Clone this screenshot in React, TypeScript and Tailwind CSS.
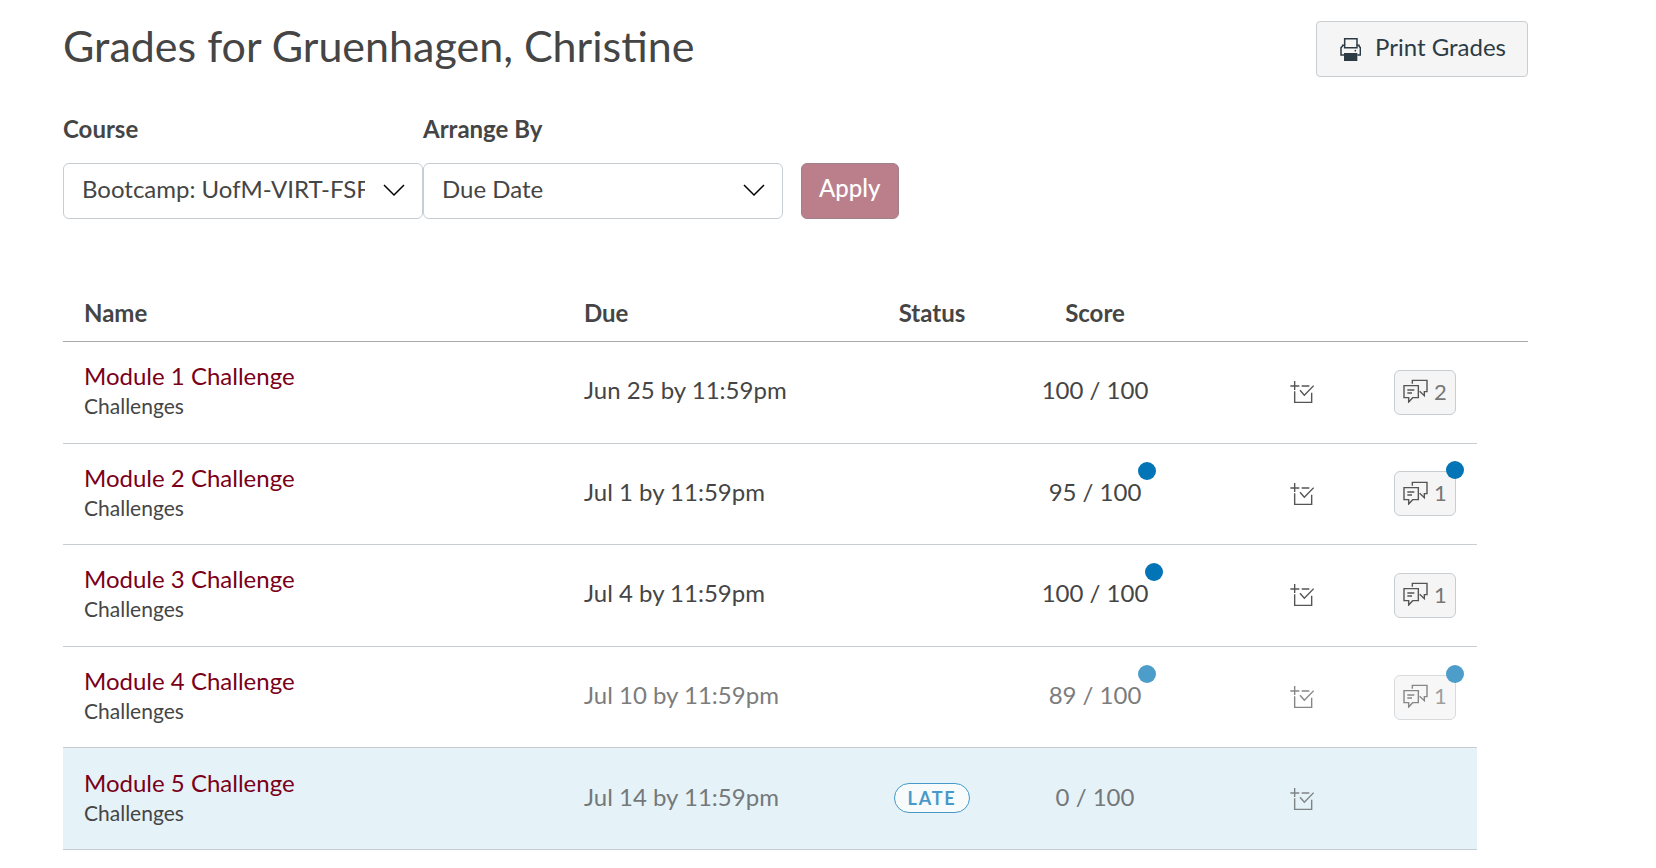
import React from "react";

type Row = {
  id: number;
  due: string;
  score: string;
  comments?: number;
  late?: boolean;
  dim?: boolean;
  scoreDot?: boolean;
  commentDot?: boolean;
};

const rows: Row[] = [
  { id: 1, due: "Jun 25 by 11:59pm", score: "100 / 100", comments: 2 },
  { id: 2, due: "Jul 1 by 11:59pm", score: "95 / 100", comments: 1, scoreDot: true, commentDot: true },
  { id: 3, due: "Jul 4 by 11:59pm", score: "100 / 100", comments: 1, scoreDot: true },
  { id: 4, due: "Jul 10 by 11:59pm", score: "89 / 100", comments: 1, scoreDot: true, commentDot: true, dim: true },
  { id: 5, due: "Jul 14 by 11:59pm", score: "0 / 100", late: true, dim: true },
];

function PrinterIcon() {
  return (
    <svg viewBox="0 0 63 75" className="h-[25px] w-[21px]" fill="none" stroke="currentColor" strokeWidth="4.5" aria-hidden="true">
      <path d="M14 24V5h37v19" />
      <path d="M12 54H3V32l5-5v-2h6v7h37v-7h6v2l4 5v22h-9" />
      <rect x="12" y="48" width="40" height="24" fill="currentColor" stroke="none" />
      <circle cx="46" cy="41" r="2.5" fill="currentColor" stroke="none" />
    </svg>
  );
}

function RubricIcon() {
  return (
    <svg viewBox="0 0 72 72" className="h-6 w-6" fill="none" stroke="currentColor" strokeWidth="4.2" aria-hidden="true">
      <path d="M14 3v27M1 18h27M35 18h23M14 34v33h51V38M30 31l13 15 28-29" />
    </svg>
  );
}

function CommentsIcon() {
  return (
    <svg viewBox="0 0 75 72" className="h-6 w-[25px]" fill="none" stroke="currentColor" strokeWidth="4.2" aria-hidden="true">
      <path d="M28 14V4h44v34h-8v12L50 37" />
      <path d="M3 20h43v36H29L17 69V56H3zM13 33h21M13 42h14" />
    </svg>
  );
}

function Chevron() {
  return (
    <svg viewBox="0 0 22 13" className="pointer-events-none absolute top-[21px] right-[18px] h-[13px] w-[22px]" fill="none" stroke="#000" strokeWidth="1.5" aria-hidden="true">
      <path d="M1 1l10 10L21 1" />
    </svg>
  );
}

function Picker({ id, label, value }: { id: string; label: string; value: string }) {
  return (
    <div className="w-[360px]">
      <label htmlFor={id} className="mb-4 block text-2xl leading-9 font-bold">
        {label}
      </label>
      <div className="relative">
        <select id={id} className="h-14 w-full appearance-none rounded-md border border-[#c7cdd1] bg-white pr-[57px] pb-1 pl-[18px] text-2xl">
          <option>{value}</option>
        </select>
        <Chevron />
      </div>
    </div>
  );
}

export default function App() {
  return (
    <main className="bg-white pr-32 pl-[63px] font-['Lato',sans-serif] text-2xl text-[#454545]">
      <header className="flex items-start justify-between pt-[21px]">
        <h1 className="text-[43px] leading-[50px]">Grades for Gruenhagen, Christine</h1>
        <button type="button" className="flex h-14 items-center gap-[14px] rounded border border-[#c7cdd1] bg-[#f5f5f5] pr-[21px] pb-1 pl-[23px] text-[#2d3b45]">
          <span className="pt-1"><PrinterIcon /></span>
          Print Grades
        </button>
      </header>

      <form className="flex items-end pt-[34px]">
        <Picker id="course" label="Course" value="Bootcamp: UofM-VIRT-FSF-PT-04" />
        <Picker id="arrange" label="Arrange By" value="Due Date" />
        <button type="button" className="ml-[18px] h-14 rounded-md border border-[#a0808a] bg-[#bb7f8b] px-[17px] pb-1.5 font-medium text-white">
          Apply
        </button>
      </form>

      <table className="mt-[65px] h-[566px] w-full table-fixed border-separate border-spacing-0">
        <colgroup>
          <col />
          <col className="w-[285px]" />
          <col className="w-[168px]" />
          <col className="w-[158px]" />
          <col className="w-[96px]" />
          <col className="w-[64px]" />
          <col className="w-[143px]" />
          <col className="w-[51px]" />
        </colgroup>
        <thead>
          <tr className="h-[58px]">
            <th className="border-b border-[#a5a9ac] px-[21px] text-left">Name</th>
            <th className="border-b border-[#a5a9ac] px-[21px] text-left">Due</th>
            <th className="border-b border-[#a5a9ac]">Status</th>
            <th className="border-b border-[#a5a9ac]">Score</th>
            <th className="border-b border-[#a5a9ac]" colSpan={4}></th>
          </tr>
        </thead>
        <tbody>
          {rows.map((r) => {
            const cell = r.late ? "border-b border-[#c7cdd1] bg-[#e5f2f8]" : "border-b border-[#c7cdd1]";
            const fade = r.dim ? "opacity-70" : "";
            return (
              <tr key={r.id} className="h-[101px]">
                <th scope="row" className={`${cell} px-[21px] pb-1 text-left font-normal`}>
                  <a href="#" className="block leading-8 text-[#7a0019]">Module {r.id} Challenge</a>
                  <div className="text-[21px] leading-7">Challenges</div>
                </th>
                <td className={`${cell} px-[21px] pb-1`}>
                  <div className={fade}>{r.due}</div>
                </td>
                <td className={`${cell} pb-1 text-center`}>
                  {r.late && (
                    <span className="inline-block rounded-full border border-[#0374b5] bg-white px-[13px] text-lg leading-7 font-bold tracking-widest text-[#0374b5] opacity-70">
                      LATE
                    </span>
                  )}
                </td>
                <td className={`${cell} pb-1 text-center`}>
                  <span className={`relative inline-block ${fade}`}>
                    {r.score}
                    {r.scoreDot && <span className="absolute -top-[14px] -right-[15px] size-[18px] rounded-full bg-[#0374b5]" />}
                  </span>
                </td>
                <td className={cell}></td>
                <td className={cell}>
                  <button type="button" aria-label="Rubric" className={`mx-auto block text-[#555] ${fade}`}>
                    <RubricIcon />
                  </button>
                </td>
                <td className={`${cell} pr-[21px]`}>
                  {r.comments && (
                    <button type="button" className={`relative ml-auto flex h-[45px] w-[62px] items-center gap-[6px] rounded-md border border-[#c7cdd1] bg-[#f5f5f5] pb-0.5 pl-2 text-[22px] text-[#777] ${fade}`}>
                      <span className="text-[#555]"><CommentsIcon /></span>
                      {r.comments}
                      {r.commentDot && <span className="absolute -top-[11px] -right-[9px] size-[18px] rounded-full bg-[#0374b5]" />}
                    </button>
                  )}
                </td>
              </tr>
            );
          })}
        </tbody>
      </table>
    </main>
  );
}
